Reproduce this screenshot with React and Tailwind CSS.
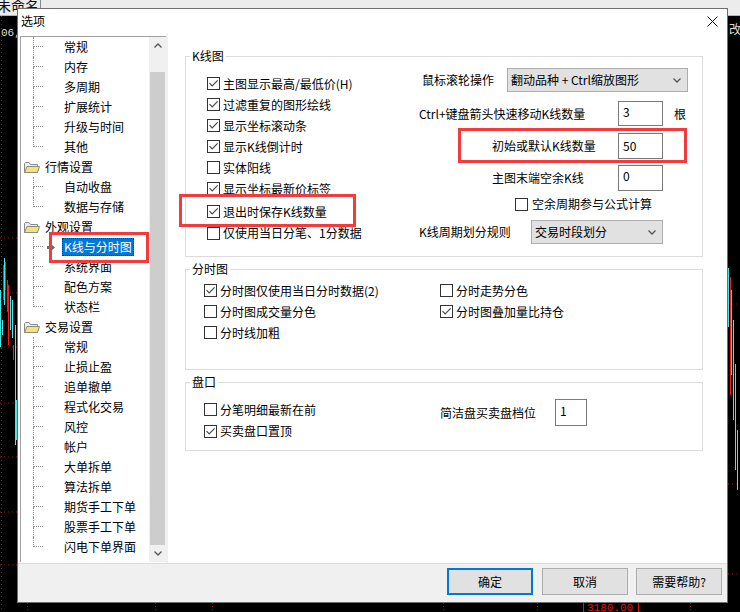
import React from "react";

const treeGroups = [
  { name: null, items: ["常规", "内存", "多周期", "扩展统计", "升级与时间", "其他"] },
  { name: "行情设置", items: ["自动收盘", "数据与存储"] },
  { name: "外观设置", items: ["K线与分时图", "系统界面", "配色方案", "状态栏"] },
  {
    name: "交易设置",
    items: ["常规", "止损止盈", "追单撤单", "程式化交易", "风控", "帐户", "大单拆单", "算法拆单", "期货手工下单", "股票手工下单", "闪电下单界面"],
  },
];

const klineChecks = [
  ["主图显示最高/最低价(H)", true],
  ["过滤重复的图形绘线", true],
  ["显示坐标滚动条", true],
  ["显示K线倒计时", true],
  ["实体阳线", false],
  ["显示坐标最新价标签", true],
];

// little chart drawn behind the dialog
const ChartBackground = () => (
  <svg className="absolute inset-0" width="740" height="612" viewBox="0 0 740 612">
    <rect width="740" height="612" fill="#000" />
    <rect width="740" height="16" fill="#ececec" />
    <line x1="0" y1="15.5" x2="740" y2="15.5" stroke="#b4b4b4" />
    <line x1="40.5" y1="0" x2="40.5" y2="16" stroke="#8a8a8a" />
    <text x="-3" y="11" fontSize="14" fill="#111" fontFamily="Noto Sans CJK SC, sans-serif">未命名</text>
    <text x="1" y="36" fontSize="11" fill="#ddd" fontFamily="Liberation Mono, monospace">06,</text>
    <text x="729" y="34" fontSize="12" fill="#ddd" fontFamily="Noto Sans CJK SC, sans-serif">改(</text>
    {[238, 293, 347, 403, 457, 512, 565].map((y) => (
      <line key={y} x1="0" y1={y} x2="17" y2={y} stroke="#a01010" strokeDasharray="1 3" />
    ))}
    {[304, 484, 574].map((y) => (
      <line key={y} x1="728" y1={y} x2="740" y2={y} stroke="#a01010" strokeDasharray="1 3" />
    ))}
    <line x1="1.5" y1="16" x2="1.5" y2="612" stroke="#a01010" strokeDasharray="1 3" />
    {[27, 155, 212, 443, 537, 690].map((x) => (
      <line key={x} x1={x + 0.5} y1="603" x2={x + 0.5} y2="612" stroke="#b01010" strokeDasharray="1 2" />
    ))}
    <rect x="583.5" y="600.5" width="55" height="14" fill="none" stroke="#e01010" />
    <text x="587" y="611" fontSize="11" fill="#e01010" fontFamily="Liberation Mono, monospace">3180.00</text>
    <g strokeWidth="1">
      <line x1="3.5" y1="265" x2="3.5" y2="300" stroke="#ff1a1a" />
      <line x1="5.5" y1="262" x2="5.5" y2="290" stroke="#ff1a1a" />
      <line x1="7.5" y1="280" x2="7.5" y2="312" stroke="#ff1a1a" />
      <line x1="8.5" y1="285" x2="8.5" y2="345" stroke="#ff1a1a" />
      <line x1="0.5" y1="290" x2="0.5" y2="347" stroke="#40e8e8" />
      <line x1="4.5" y1="258" x2="4.5" y2="305" stroke="#40e8e8" />
      <line x1="2.5" y1="320" x2="2.5" y2="335" stroke="#40e8e8" />
      <line x1="10.5" y1="296" x2="10.5" y2="330" stroke="#40e8e8" />
      <line x1="12.5" y1="300" x2="12.5" y2="338" stroke="#40e8e8" />
      <line x1="13.5" y1="345" x2="13.5" y2="360" stroke="#ff1a1a" />
      <line x1="15.5" y1="325" x2="15.5" y2="445" stroke="#40e8e8" />
      <line x1="16.5" y1="400" x2="16.5" y2="440" stroke="#40e8e8" />
      <line x1="728.5" y1="268" x2="728.5" y2="327" stroke="#40e8e8" />
      <line x1="730.5" y1="277" x2="730.5" y2="395" stroke="#ff1a1a" />
      <line x1="731.5" y1="290" x2="731.5" y2="375" stroke="#40e8e8" />
      <line x1="733.5" y1="320" x2="733.5" y2="420" stroke="#40e8e8" />
      <line x1="735.5" y1="364" x2="735.5" y2="470" stroke="#40e8e8" />
      <line x1="737.5" y1="430" x2="737.5" y2="490" stroke="#40e8e8" />
    </g>
  </svg>
);

const CheckBox = ({ checked }) => (
  <span className="flex h-[13px] w-[13px] shrink-0 items-center justify-center border border-[#333] bg-white">
    {checked && (
      <svg width="11" height="11" viewBox="0 0 11 11">
        <path d="M1.5 5.2 L4.2 8 L9.6 2.4" fill="none" stroke="#4a4a4a" strokeWidth="1.2" />
      </svg>
    )}
  </span>
);

const CheckRow = ({ label, checked, className = "" }) => (
  <div className={`flex items-center gap-[3px] ${className}`}>
    <CheckBox checked={checked} />
    <span className="whitespace-nowrap leading-[16px]">{label}</span>
  </div>
);

const Chevron = ({ up }) => (
  <svg width="8" height="5" viewBox="0 0 8 5">
    <path d={up ? "M0.5 4.5 L4 1 L7.5 4.5" : "M0.5 0.5 L4 4 L7.5 0.5"} fill="none" stroke="#555" strokeWidth="1.3" />
  </svg>
);

const Folder = () => (
  <svg width="16" height="13" viewBox="0 0 16 13">
    <path d="M0.5 2.5 L0.5 11.5 L13.5 11.5 L13.5 3.5 L6.5 3.5 L5 1.5 L1.5 1.5 Z" fill="#ececec" stroke="#8a8a8a" />
    <path d="M0.5 11.5 L3 5.5 L15.5 5.5 L13.5 11.5 Z" fill="#f2e470" stroke="#8a8a8a" />
  </svg>
);

const ArrowMark = () => (
  <svg width="8" height="7" viewBox="0 0 8 7">
    <rect x="0" y="2" width="4" height="3" fill="#6a6a6a" />
    <path d="M4 0 L8 3.5 L4 7 Z" fill="#6a6a6a" />
  </svg>
);

const Select = ({ text, className }) => (
  <div className={`flex items-center justify-between border border-[#adadad] bg-[#e1e1e1] pl-[3px] pr-[6px] ${className}`}>
    <span className="whitespace-nowrap leading-[16px]">{text}</span>
    <Chevron />
  </div>
);

const NumBox = ({ value, className }) => (
  <div className={`border border-[#7a7a7a] bg-white pl-[4px] pt-[2px] leading-[16px] ${className}`}>{value}</div>
);

const TreeChild = ({ label, last, selected }) => (
  <div className="flex h-[20px] items-center">
    <div className="ml-[12px] flex h-full w-[10px] flex-col">
      <div className="h-[10px] border-b border-l border-dotted border-[#8f8f8f]" />
      <div className={last ? "flex-1" : "flex-1 border-l border-dotted border-[#8f8f8f]"} />
    </div>
    <div className="flex w-[19px] items-center pl-[4px]">{selected && <ArrowMark />}</div>
    <span
      className={
        selected
          ? "h-[18px] whitespace-nowrap border border-dotted border-[#333] bg-[#0078d7] px-[1px] leading-[16px] text-white"
          : "h-[18px] whitespace-nowrap border border-transparent px-[1px] leading-[16px]"
      }
    >
      {label}
    </span>
  </div>
);

const Tree = () => (
  <div className="flex h-[526px] w-[146px] border-l border-t border-[#a0a0a0] bg-white">
    <div className="w-[128px] overflow-hidden">
      {treeGroups.map((g, gi) => (
        <div key={gi}>
          {g.name && (
            <div className="flex h-[20px] items-center">
              <div className="ml-[3px] flex w-[16px]">
                <Folder />
              </div>
              <span className="ml-[5px] whitespace-nowrap leading-[16px]">{g.name}</span>
            </div>
          )}
          {g.items.map((it, i) => (
            <TreeChild key={i} label={it} last={i === g.items.length - 1} selected={it === "K线与分时图"} />
          ))}
        </div>
      ))}
    </div>
    {/* scrollbar */}
    <div className="flex w-[17px] flex-col bg-[#f0f0f0]">
      <div className="flex h-[17px] items-center justify-center">
        <Chevron up />
      </div>
      <div className="flex flex-1 flex-col px-[1px]">
        <div className="mt-[18px] flex-1 bg-[#cdcdcd]" />
      </div>
      <div className="flex h-[17px] items-center justify-center">
        <Chevron />
      </div>
    </div>
  </div>
);

const Legend = ({ children }) => (
  <legend className="ml-[4px] px-[2px] leading-[16px]">{children}</legend>
);

export default function App() {
  return (
    <div className="relative h-[612px] w-[740px] overflow-hidden bg-black font-['Noto_Sans_CJK_SC',sans-serif] text-[12px] text-black">
      <ChartBackground />

      {/* dialog window */}
      <div className="absolute left-[17px] top-[8px] flex h-[595px] w-[711px] flex-col border border-[#6f6f6f] bg-white">
        <div className="flex h-[24px] shrink-0 items-center justify-between pl-[3px] pr-[9px]">
          <span className="leading-[16px]">选项</span>
          <svg width="11" height="11" viewBox="0 0 11 11">
            <path d="M0.5 0.5 L10.5 10.5 M10.5 0.5 L0.5 10.5" stroke="#111" strokeWidth="1" />
          </svg>
        </div>

        <div className="flex h-[530px] shrink-0">
          <div className="pl-[2px] pt-[3px]">
            <Tree />
          </div>
          <div className="w-[2px] bg-[#f0f0f0]" />
          <div className="flex-1 pl-[17px] pt-[15px]">
            {/* K线图 */}
            <fieldset className="h-[209px] w-[518px] border border-[#dcdcdc]">
              <Legend>K线图</Legend>
              <div className="flex">
                <div className="w-[233px] pl-[21px] pt-[9px]">
                  {klineChecks.map(([t, c]) => (
                    <CheckRow key={t} label={t} checked={c} className="h-[21px]" />
                  ))}
                  <CheckRow label="退出时保存K线数量" checked className="mt-[2px] h-[21px]" />
                  <CheckRow label="仅使用当日分笔、1分数据" checked={false} className="h-[22px]" />
                </div>
                <div className="flex-1">
                  <div className="mt-[4px] flex h-[24px] items-center">
                    <span className="ml-[3px] w-[85px] whitespace-nowrap leading-[16px]">鼠标滚轮操作</span>
                    <Select text="翻动品种 + Ctrl缩放图形" className="h-[24px] w-[181px]" />
                  </div>
                  <div className="mt-[9px] flex h-[25px] items-center">
                    <span className="w-[199px] whitespace-nowrap leading-[16px]">Ctrl+键盘箭头快速移动K线数量</span>
                    <NumBox value="3" className="h-[25px] w-[45px]" />
                    <span className="ml-[11px] leading-[16px]">根</span>
                  </div>
                  <div className="mt-[7px] flex h-[26px] items-center">
                    <span className="w-[199px] whitespace-nowrap pl-[73px] leading-[16px]">初始或默认K线数量</span>
                    <NumBox value="50" className="h-[26px] w-[45px] pt-[4px]" />
                  </div>
                  <div className="mt-[6px] flex h-[26px] items-center">
                    <span className="w-[199px] whitespace-nowrap pl-[73px] leading-[16px]">主图末端空余K线</span>
                    <NumBox value="0" className="h-[26px] w-[45px]" />
                  </div>
                  <CheckRow label="空余周期参与公式计算" checked={false} className="ml-[96px] mt-[3px] h-[20px] gap-[4px]" />
                  <div className="mt-[6px] flex h-[24px] items-center">
                    <span className="w-[112px] whitespace-nowrap leading-[16px]">K线周期划分规则</span>
                    <Select text="交易时段划分" className="h-[24px] w-[132px]" />
                  </div>
                </div>
              </div>
            </fieldset>

            {/* 分时图 */}
            <fieldset className="mt-[4px] h-[109px] w-[518px] border border-[#dcdcdc]">
              <Legend>分时图</Legend>
              <div className="flex pt-[3px]">
                <div className="w-[254px] pl-[18px]">
                  <CheckRow label="分时图仅使用当日分时数据(2)" checked className="h-[21px]" />
                  <CheckRow label="分时图成交量分色" checked={false} className="h-[21px]" />
                  <CheckRow label="分时线加粗" checked={false} className="h-[21px]" />
                </div>
                <div className="flex-1">
                  <CheckRow label="分时走势分色" checked={false} className="h-[21px]" />
                  <CheckRow label="分时图叠加量比持仓" checked className="h-[21px]" />
                </div>
              </div>
            </fieldset>

            {/* 盘口 */}
            <fieldset className="mt-[4px] h-[77px] w-[518px] border border-[#dcdcdc]">
              <Legend>盘口</Legend>
              <div className="flex pt-[9px]">
                <div className="w-[254px] pl-[18px]">
                  <CheckRow label="分笔明细最新在前" checked={false} className="h-[21px]" />
                  <CheckRow label="买卖盘口置顶" checked className="h-[22px]" />
                </div>
                <div className="flex h-[27px] items-center">
                  <span className="w-[115px] whitespace-nowrap leading-[16px]">简洁盘买卖盘档位</span>
                  <NumBox value="1" className="h-[27px] w-[32px] pt-[3px]" />
                </div>
              </div>
            </fieldset>
          </div>
        </div>

        <div className="flex h-[39px] shrink-0 items-start justify-end border-t border-[#dcdcdc] bg-[#f0f0f0] pr-[5px] pt-[4px]">
          <button className="flex h-[27px] w-[86px] items-center justify-center border-2 border-[#0078d7] bg-[#e1e1e1] leading-[16px]">
            确定
          </button>
          <button className="ml-[9px] flex h-[27px] w-[86px] items-center justify-center border border-[#adadad] bg-[#e1e1e1] leading-[16px]">
            取消
          </button>
          <button className="ml-[8px] flex h-[27px] w-[86px] items-center justify-center border border-[#adadad] bg-[#e1e1e1] leading-[16px]">
            需要帮助?
          </button>
        </div>
      </div>

      {/* red annotation boxes */}
      <div className="absolute left-[49px] top-[232px] h-[31px] w-[100px] border-[3px] border-[#f03c3c]" />
      <div className="absolute left-[179px] top-[194px] h-[33px] w-[177px] border-[3px] border-[#f03c3c]" />
      <div className="absolute left-[458px] top-[128px] h-[35px] w-[229px] border-[3px] border-[#f03c3c]" />
    </div>
  );
}
